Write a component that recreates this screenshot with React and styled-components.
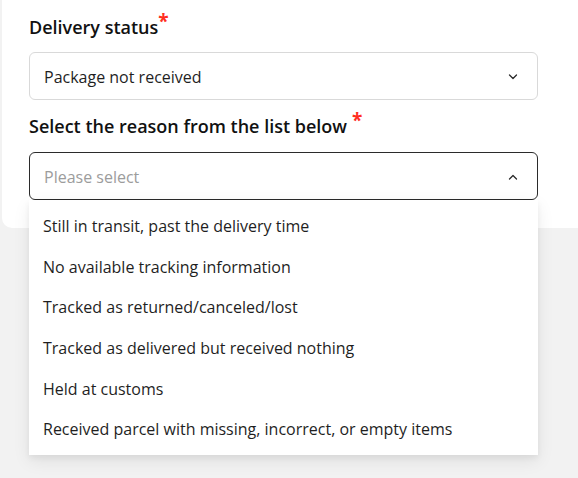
import styled, { createGlobalStyle } from "styled-components";

const GlobalStyle = createGlobalStyle`
  html, body {
    margin: 0;
    padding: 0;
    background: #f2f2f2;
    font-family: "Open Sans", "Noto Sans", sans-serif;
    color: #1a1a1a;
  }
`;

const Page = styled.div`
  position: relative;
  width: 578px;
  height: 478px;
  overflow: hidden;
  padding-left: 2px;
  box-sizing: border-box;
`;

const Card = styled.div`
  background: #fff;
  border-radius: 0 0 0 10px;
  padding: 15px 40px 0 27px;
  height: 228px;
  box-sizing: border-box;
`;

const Field = styled.div`
  position: relative;
  display: flex;
  flex-direction: column;
  & + & {
    margin-top: 14px;
  }
`;

const Label = styled.div`
  font-size: 18px;
  font-weight: 600;
  line-height: 24px;
  margin-bottom: ${(p) => p.$space || 13}px;
  color: #111;
  white-space: nowrap;
`;

const Star = styled.span`
  display: inline-block;
  color: #ff2f1f;
  font-size: 19px;
  font-weight: 700;
  line-height: 1;
  vertical-align: top;
  position: relative;
  top: -3px;
  margin-left: ${(p) => p.$gap || 0}px;
`;

const Select = styled.div`
  display: flex;
  align-items: center;
  justify-content: space-between;
  height: 48px;
  box-sizing: border-box;
  padding: 1px 19px 0 14px;
  border: 1px solid ${(p) => (p.$open ? "#2b2b2b" : "#d9d9d9")};
  border-radius: 6px;
  background: #fff;
  font-size: 16px;
  color: ${(p) => (p.$placeholder ? "#9c9c9c" : "#1f1f1f")};
`;

const Menu = styled.ul`
  position: absolute;
  top: 100%;
  left: 0;
  right: 0;
  margin: 0;
  padding: 6px 0 5px;
  list-style: none;
  background: #fff;
  box-shadow: 0 6px 16px rgba(0, 0, 0, 0.08), 0 3px 6px rgba(0, 0, 0, 0.05);
  z-index: 2;
`;

const Option = styled.li`
  height: 40.6px;
  display: flex;
  align-items: center;
  padding: 0 14px;
  font-size: 16px;
  color: #1f1f1f;
`;

const Chevron = ({ up }) => (
  <svg width="10" height="6" viewBox="0 0 10 6" fill="none">
    <path
      d={up ? "M1.5 5L5 1.5L8.5 5" : "M1.5 1L5 4.5L8.5 1"}
      stroke="#2b2b2b"
      strokeWidth="1.3"
      strokeLinecap="round"
      strokeLinejoin="round"
    />
  </svg>
);

const reasons = [
  "Still in transit, past the delivery time",
  "No available tracking information",
  "Tracked as returned/canceled/lost",
  "Tracked as delivered but received nothing",
  "Held at customs",
  "Received parcel with missing, incorrect, or empty items",
];

export default function App() {
  return (
    <>
      <GlobalStyle />
      <Page>
        <Card>
          <Field>
            <Label>
              Delivery status<Star>*</Star>
            </Label>
            <Select>
              <span>Package not received</span>
              <Chevron />
            </Select>
          </Field>
          <Field>
            <Label $space={14}>
              Select the reason from the list below<Star $gap={5}>*</Star>
            </Label>
            <Select $open $placeholder>
              <span>Please select</span>
              <Chevron up />
            </Select>
            <Menu>
              {reasons.map((r) => (
                <Option key={r}>{r}</Option>
              ))}
            </Menu>
          </Field>
        </Card>
      </Page>
    </>
  );
}
